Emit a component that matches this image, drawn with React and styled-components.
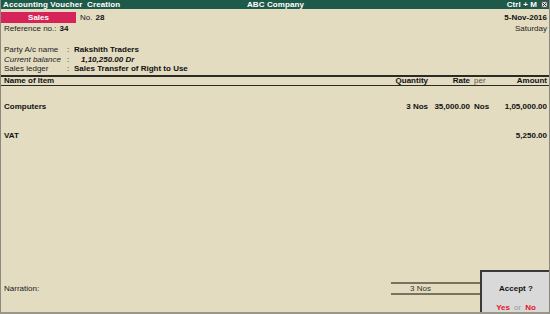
import React from 'react';
import styled, { createGlobalStyle } from 'styled-components';

const GlobalStyle = createGlobalStyle`
    html, body {
        margin: 0;
        padding: 0;
        background: #e3dcc1;
    }
    body {
        font-family: "Liberation Sans", Arial, sans-serif;
        font-size: 8px;
        color: #111;
    }
`

const Frame = styled.div`
    position: relative;
    width: 550px;
    height: 314px;
    box-sizing: border-box;
    display: flex;
    flex-direction: column;
    background: #e3dcc1;
    border-left: 1px solid #8c8a80;
    border-right: 1px solid #8c8a80;
    border-bottom: 2px solid #9a968a;
    overflow: hidden;
`

const TitleBar = styled.div`
    height: 9px;
    background: #1e5a49;
    color: #fff;
    font-weight: bold;
    font-size: 8px;
    line-height: 9px;
    display: grid;
    grid-template-columns: 1fr auto 1fr;
    padding: 0 1px 0 2px;
    letter-spacing: 0.1px;
`

const TitleRight = styled.div`
    display: flex;
    justify-content: flex-end;
    align-items: center;
    gap: 4px;
`

const CloseBox = styled.span`
    width: 7px;
    height: 7px;
    background: #d8d8d8;
    border: 1px solid #555;
    box-sizing: border-box;
    display: flex;
`

const HeaderRow = styled.div`
    display: flex;
    align-items: center;
    margin-top: 3px;
    padding-right: 2px;
    height: 11px;
`

const VoucherType = styled.div`
    width: 75px;
    height: 11px;
    background: #d6245a;
    color: #fff;
    font-weight: bold;
    text-align: center;
    line-height: 11px;
`

const Label = styled.span`
    color: #222;
    font-style: ${p => (p.$italic ? 'italic' : 'normal')};
`

const Value = styled.span`
    font-weight: bold;
    font-style: ${p => (p.$italic ? 'italic' : 'normal')};
    padding-left: ${p => p.$indent || 0}px;
`

const Spacer = styled.div`
    flex: 1;
`

const Line = styled.div`
    display: flex;
    padding: 0 2px 0 3px;
    line-height: ${p => p.$h || 10}px;
    height: ${p => p.$h || 10}px;
    margin-top: ${p => p.$mt || 0}px;
    gap: 3px;
`

const PartyGrid = styled.div`
    display: grid;
    grid-template-columns: 63px 7px 1fr;
    grid-auto-rows: 9.5px;
    line-height: 9.5px;
    padding-left: 3px;
    margin-top: 11px;
`

const Table = styled.div`
    margin-top: 1px;
`

const Row = styled.div`
    display: grid;
    grid-template-columns: 1fr 58px 42px 30px 47px;
    padding: 0 2px 0 3px;
    height: ${p => p.$h || 10}px;
    line-height: ${p => p.$h || 10}px;
    margin-top: ${p => p.$mt || 0}px;
    font-weight: bold;
`

const HeadRow = styled(Row)`
    border-top: 2px solid #2a2a26;
    border-bottom: 1px solid #2a2a26;
`

const Cell = styled.div`
    text-align: ${p => p.$align || 'left'};
    padding-left: ${p => p.$pl || 0}px;
    font-weight: ${p => (p.$light ? 'normal' : 'bold')};
    color: ${p => (p.$light ? '#555' : 'inherit')};
    white-space: nowrap;
`

const Footer = styled.div`
    display: flex;
    align-items: center;
    margin-bottom: 17px;
    padding-left: 3px;
`

const Totals = styled.div`
    margin-left: auto;
    margin-right: 68px;
    width: 40px;
    height: 9px;
    border-top: 2px solid #7b735f;
    border-bottom: 2px solid #7b735f;
    line-height: 9px;
    text-align: right;
    padding-right: 50px;
    box-sizing: content-box;
    color: #333;
`

const AcceptBox = styled.div`
    position: absolute;
    right: -1px;
    bottom: -2px;
    width: 70px;
    height: 44px;
    box-sizing: border-box;
    background: #d9d9d9;
    border: 2px solid #3a3a3a;
    border-right: none;
    border-bottom: none;
    display: flex;
    flex-direction: column;
    align-items: center;
    font-weight: bold;
`

const AcceptTitle = styled.div`
    margin-top: 12px;
    line-height: 9px;
`

const Choice = styled.div`
    margin-top: auto;
    margin-bottom: 2px;
    line-height: 9px;
    display: flex;
    gap: 4px;
`

const Option = styled.span`
    color: ${p => (p.$muted ? '#999' : '#e8141c')};
    font-weight: ${p => (p.$muted ? 'normal' : 'bold')};
`

export default function App() {
    return (<>
        <GlobalStyle />
        <Frame>
            <TitleBar>
                <span>Accounting Voucher&nbsp; Creation</span>
                <span>ABC Company</span>
                <TitleRight>
                    <span>Ctrl + M</span>
                    <CloseBox>
                        <svg width="5" height="5" viewBox="0 0 5 5">
                            <path d="M0.5 0.5 L4.5 4.5 M4.5 0.5 L0.5 4.5" stroke="#333" strokeWidth="1" />
                        </svg>
                    </CloseBox>
                </TitleRight>
            </TitleBar>

            <HeaderRow>
                <VoucherType>Sales</VoucherType>
                <Label style={{ marginLeft: 4 }}>No.</Label>
                <Value style={{ marginLeft: 3 }}>28</Value>
                <Spacer />
                <Value>5-Nov-2016</Value>
            </HeaderRow>
            <Line $h={11}>
                <Label>Reference no.:</Label>
                <Value>34</Value>
                <Spacer />
                <Label>Saturday</Label>
            </Line>

            <PartyGrid>
                <Label>Party A/c name</Label>
                <Label>:</Label>
                <Value>Rakshith Traders</Value>
                <Label $italic>Current balance</Label>
                <Label>:</Label>
                <Value $italic $indent={7}>1,10,250.00 Dr</Value>
                <Label>Sales ledger</Label>
                <Label>:</Label>
                <Value>Sales Transfer of Right to Use</Value>
            </PartyGrid>

            <Table>
                <HeadRow $h={8}>
                    <Cell>Name of Item</Cell>
                    <Cell $align="right">Quantity</Cell>
                    <Cell $align="right">Rate</Cell>
                    <Cell $light $pl={4}>per</Cell>
                    <Cell $align="right">Amount</Cell>
                </HeadRow>
                <Row $mt={16}>
                    <Cell>Computers</Cell>
                    <Cell $align="right">3 Nos</Cell>
                    <Cell $align="right">35,000.00</Cell>
                    <Cell $pl={4}>Nos</Cell>
                    <Cell $align="right">1,05,000.00</Cell>
                </Row>
                <Row $mt={19}>
                    <Cell>VAT</Cell>
                    <Cell />
                    <Cell />
                    <Cell />
                    <Cell $align="right">5,250.00</Cell>
                </Row>
            </Table>

            <Spacer />

            <Footer>
                <Label>Narration:</Label>
                <Totals>3 Nos</Totals>
            </Footer>

            <AcceptBox>
                <AcceptTitle>Accept ?</AcceptTitle>
                <Choice>
                    <Option>Yes</Option>
                    <Option $muted>or</Option>
                    <Option>No</Option>
                </Choice>
            </AcceptBox>
        </Frame>
    </>)
}
